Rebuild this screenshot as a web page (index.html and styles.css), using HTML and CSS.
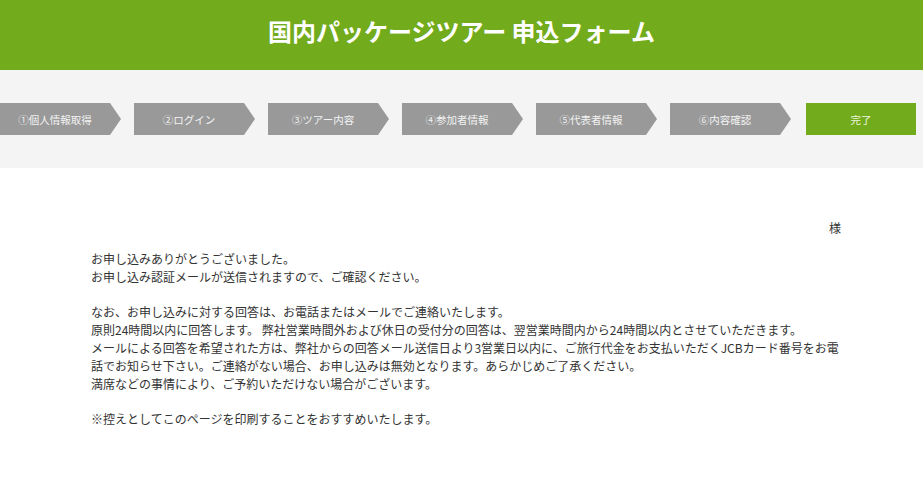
FILE: index.html
```html
<!DOCTYPE html>
<html lang="ja">
<head>
<meta charset="utf-8">
<title>国内パッケージツアー 申込フォーム</title>
<link rel="stylesheet" href="styles.css">
</head>
<body>
<header class="header">
  <h1 class="title">国内パッケージツアー 申込フォーム</h1>
</header>
<nav class="steps-band">
  <ol class="steps">
    <li class="step">①個人情報取得</li>
    <li class="step">②ログイン</li>
    <li class="step">③ツアー内容</li>
    <li class="step">④参加者情報</li>
    <li class="step">⑤代表者情報</li>
    <li class="step">⑥内容確認</li>
    <li class="step step-done">完了</li>
  </ol>
</nav>
<main class="content">
  <p class="name">様</p>
  <p class="para">お申し込みありがとうございました。<br>お申し込み認証メールが送信されますので、ご確認ください。</p>
  <p class="para">なお、お申し込みに対する回答は、お電話またはメールでご連絡いたします。<br>原則24時間以内に回答します。 弊社営業時間外および休日の受付分の回答は、翌営業時間内から24時間以内とさせていただきます。<br>メールによる回答を希望された方は、弊社からの回答メール送信日より3営業日以内に、ご旅行代金をお支払いただくJCBカード番号をお電話でお知らせ下さい。ご連絡がない場合、お申し込みは無効となります。あらかじめご了承ください。<br>満席などの事情により、ご予約いただけない場合がございます。</p>
  <p class="para">※控えとしてこのページを印刷することをおすすめいたします。</p>
</main>
</body>
</html>
```

FILE: styles.css
```css
html, body {
  margin: 0;
  padding: 0;
  background: #ffffff;
  font-family: "Noto Sans CJK JP", "Noto Sans", sans-serif;
}

.header {
  background: #72ab1b;
  height: 70px;
  box-sizing: border-box;
  padding-bottom: 8px;
  display: flex;
  align-items: center;
  justify-content: center;
}

.title {
  margin: 0;
  color: #ffffff;
  font-size: 24px;
  font-weight: bold;
  line-height: 1;
}

.steps-band {
  background: #f4f4f4;
  height: 98px;
  display: flex;
  align-items: center;
}

.steps {
  list-style: none;
  margin: 0;
  padding: 0;
  display: flex;
  gap: 13px;
}

.step {
  width: 121px;
  height: 32px;
  box-sizing: border-box;
  padding-right: 11px;
  background: #999999;
  color: #f2f2f2;
  font-size: 10.5px;
  display: flex;
  align-items: center;
  justify-content: center;
  clip-path: polygon(0 0, 110px 0, 121px 50%, 110px 100%, 0 100%);
}

.step-done {
  width: 110px;
  padding-right: 0;
  margin-left: 2px;
  background: #72ab1b;
  color: #eef6de;
  clip-path: none;
}

.content {
  width: 750px;
  margin-left: 91px;
  padding-top: 51px;
  color: #333333;
  font-size: 12px;
  line-height: 18px;
}

.name {
  margin: 0 0 13px;
  text-align: right;
}

.para {
  margin: 0 0 17px;
}
```
